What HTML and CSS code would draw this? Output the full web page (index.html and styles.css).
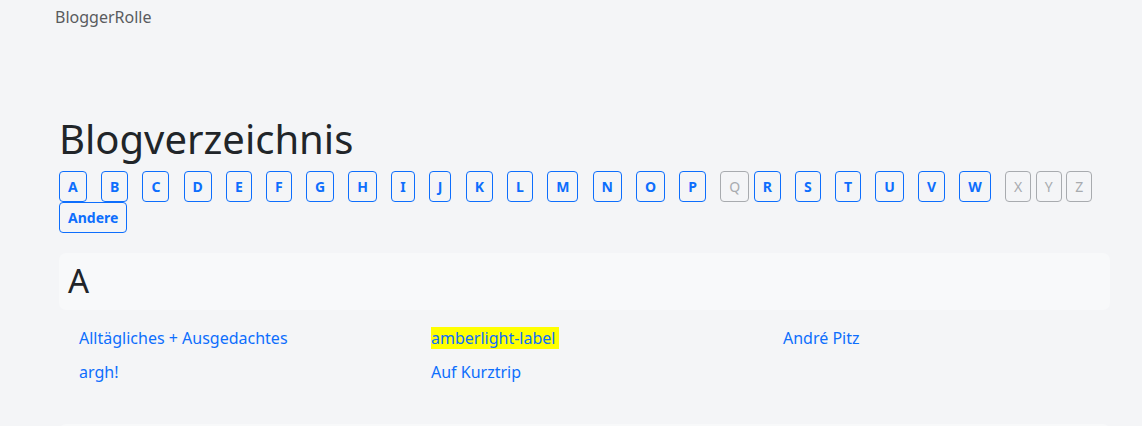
FILE: index.html
```html
<!DOCTYPE html>
<html lang="de">

<head>
    <meta charset="UTF-8">
    <meta name="viewport" content="width=device-width, initial-scale=1.0">
    <title>Blogverzeichnis - BloggerRolle</title>
    <link rel="stylesheet" href="styles.css">
</head>

<body>
    <nav class="navbar">
        <a class="brand" href="#">BloggerRolle</a>
    </nav>

    <main class="page">
        <h1>Blogverzeichnis</h1>

        <div class="letters">
            <a class="letter" href="#A">A</a>
            <a class="letter" href="#B">B</a>
            <a class="letter" href="#C">C</a>
            <a class="letter" href="#D">D</a>
            <a class="letter" href="#E">E</a>
            <a class="letter" href="#F">F</a>
            <a class="letter" href="#G">G</a>
            <a class="letter" href="#H">H</a>
            <a class="letter" href="#I">I</a>
            <a class="letter" href="#J">J</a>
            <a class="letter" href="#K">K</a>
            <a class="letter" href="#L">L</a>
            <a class="letter" href="#M">M</a>
            <a class="letter" href="#N">N</a>
            <a class="letter" href="#O">O</a>
            <a class="letter" href="#P">P</a>
            <span class="letter disabled">Q</span>
            <a class="letter" href="#R">R</a>
            <a class="letter" href="#S">S</a>
            <a class="letter" href="#T">T</a>
            <a class="letter" href="#U">U</a>
            <a class="letter" href="#V">V</a>
            <a class="letter" href="#W">W</a>
            <span class="letter disabled">X</span>
            <span class="letter disabled">Y</span>
            <span class="letter disabled">Z</span>
            <a class="letter" href="#andere">Andere</a>
        </div>

        <section class="group" id="A">
            <h2 class="group-title">A</h2>
            <ul class="blogs">
                <li><a href="#">Alltägliches + Ausgedachtes</a></li>
                <li><a class="marked" href="#">amberlight-label</a></li>
                <li><a href="#">André Pitz</a></li>
                <li><a href="#">argh!</a></li>
                <li><a href="#">Auf Kurztrip</a></li>
            </ul>
        </section>

        <section class="group" id="B">
            <h2 class="group-title">B</h2>
        </section>
    </main>
</body>

</html>
```

FILE: styles.css
```css
body {
    font-family: "Noto Sans", sans-serif;
    font-size: 16px;
    line-height: 1.5;
    margin: 0;
    padding: 0;
    color: #212529;
    background-color: #f4f5f7;
}

a {
    color: #0d6efd;
    text-decoration: none;
}

.navbar {
    padding: 5px 0 0 55px;
}

.brand {
    color: #595b5e;
    font-size: 16px;
}

.page {
    padding: 0 32px 0 59px;
}

h1 {
    font-size: 40px;
    font-weight: 400;
    line-height: 1.2;
    margin: 86px 0 8px 0;
}

.letters {
    display: flex;
    flex-wrap: wrap;
}

.letter {
    display: inline-block;
    font-size: 14px;
    font-weight: 700;
    line-height: 21px;
    padding: 4px 8px;
    border: 1px solid #0d6efd;
    border-radius: 4px;
    color: #0d6efd;
    margin-right: 14.2px;
}

.letter.disabled {
    font-weight: 400;
    color: #a8abaf;
    border-color: #a8abaf;
    margin-right: 4.5px;
}

.group {
    margin-top: 20px;
}

.group-title {
    font-size: 33px;
    font-weight: 400;
    line-height: 40px;
    margin: 0;
    padding: 8px 9px 9px 9px;
    background-color: #f8f9fa;
    border-radius: 7px;
}

.blogs {
    list-style-type: none;
    margin: 16px 0 40px 0;
    padding: 0 0 0 20px;
    display: grid;
    grid-template-columns: 352px 352px 352px;
    row-gap: 10px;
}

.marked {
    background-color: #ffff00;
    padding-right: 4px;
}
```
